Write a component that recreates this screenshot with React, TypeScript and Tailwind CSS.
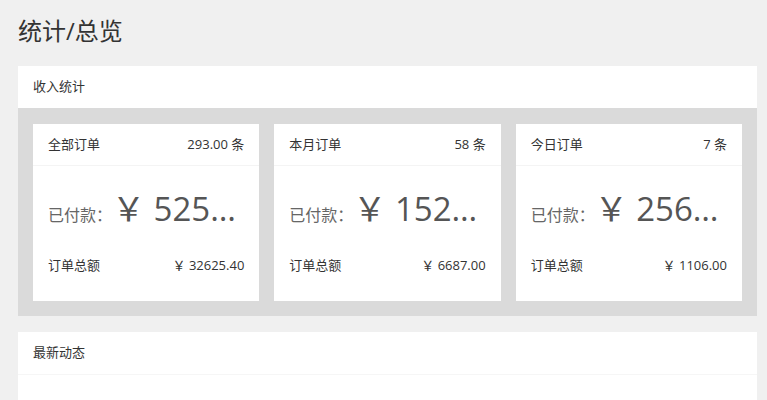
import React from "react";

const font = { fontFamily: '"Open Sans", "Noto Sans CJK SC", sans-serif' };

function Card({ title, count, paid, total }: { title: string; count: string; paid: string; total: string }) {
  return (
    <div className="bg-white flex flex-col min-w-0">
      <div className="h-[42px] px-[15px] flex items-center justify-between border-b border-[#f4f4f4] text-[13px] text-[#333]">
        <span>{title}</span>
        <span>{count}</span>
      </div>
      <div className="h-[86px] px-[15px] flex items-center min-w-0">
        <div className="flex items-baseline min-w-0 w-full">
          <span className="text-[16px] text-[#666] shrink-0">已付款：</span>
          <span className="text-[33px] leading-[44px] text-[#555] truncate min-w-0 pr-[2px]">{paid}</span>
        </div>
      </div>
      <div className="h-[28px] px-[15px] flex items-center justify-between text-[13px] text-[#333]">
        <span>订单总额</span>
        <span>{total}</span>
      </div>
      <div className="h-[21px]" />
    </div>
  );
}

export default function App() {
  return (
    <div className="bg-[#f0f0f0] min-h-screen pl-[18px] pr-[10px] pt-[15px]" style={font}>
      <h1 className="text-[24px] leading-[32px] text-[#333] mb-[19px]">统计/总览</h1>
      <div className="bg-white">
        <div className="h-[42px] px-[15px] flex items-center text-[13px] text-[#333]">收入统计</div>
        <div className="bg-[#dadada] pt-[16px] pb-[15px] px-[15px] grid grid-cols-3 gap-[15px]">
          <Card title="全部订单" count="293.00 条" paid="￥ 52562.40" total="￥ 32625.40" />
          <Card title="本月订单" count="58 条" paid="￥ 15225.00" total="￥ 6687.00" />
          <Card title="今日订单" count="7 条" paid="￥ 256.00" total="￥ 1106.00" />
        </div>
      </div>
      <div className="bg-white mt-[16px]">
        <div className="h-[43px] px-[15px] flex items-center text-[13px] text-[#333] border-b border-[#f6f6f6]">最新动态</div>
        <div className="h-[60px]" />
      </div>
    </div>
  );
}
